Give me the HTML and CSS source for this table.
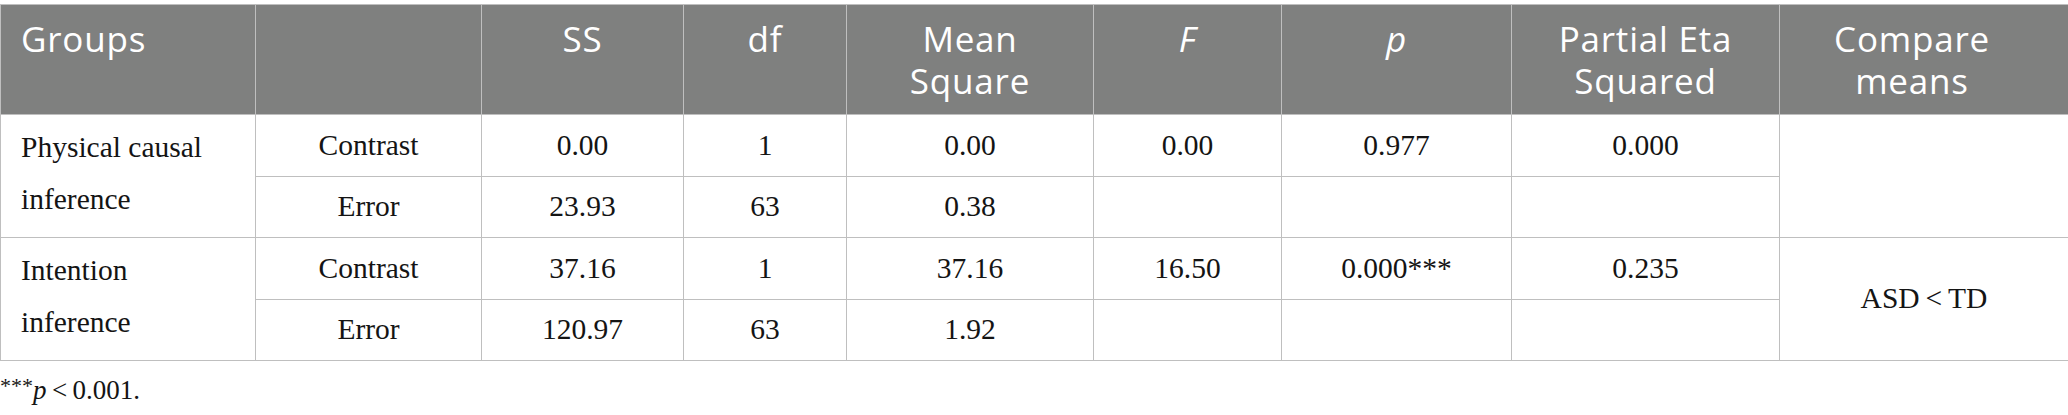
FILE: index.html
```html
<!DOCTYPE html>
<html lang="en">
<head>
<meta charset="utf-8">
<title>ANOVA table</title>
<link rel="stylesheet" href="styles.css">
</head>
<body>
<div class="page">
  <table class="data">
    <colgroup>
      <col class="c1"><col class="c2"><col class="c3"><col class="c4"><col class="c5"><col class="c6"><col class="c7"><col class="c8"><col class="c9">
    </colgroup>
    <thead>
      <tr>
        <th class="left">Groups</th>
        <th></th>
        <th>SS</th>
        <th>df</th>
        <th>Mean<br>Square</th>
        <th><i>F</i></th>
        <th><i>p</i></th>
        <th>Partial Eta<br>Squared</th>
        <th class="last">Compare<br>means</th>
      </tr>
    </thead>
    <tbody>
      <tr class="r-a">
        <td class="group" rowspan="2">Physical causal<br>inference</td>
        <td>Contrast</td>
        <td>0.00</td>
        <td>1</td>
        <td>0.00</td>
        <td>0.00</td>
        <td>0.977</td>
        <td>0.000</td>
        <td class="cmp" rowspan="2"></td>
      </tr>
      <tr class="r-b">
        <td>Error</td>
        <td>23.93</td>
        <td>63</td>
        <td>0.38</td>
        <td></td>
        <td></td>
        <td></td>
      </tr>
      <tr class="r-a">
        <td class="group" rowspan="2">Intention<br>inference</td>
        <td>Contrast</td>
        <td>37.16</td>
        <td>1</td>
        <td>37.16</td>
        <td>16.50</td>
        <td>0.000***</td>
        <td>0.235</td>
        <td class="cmp" rowspan="2">ASD&thinsp;&lt;&thinsp;TD</td>
      </tr>
      <tr class="r-b">
        <td>Error</td>
        <td>120.97</td>
        <td>63</td>
        <td>1.92</td>
        <td></td>
        <td></td>
        <td></td>
      </tr>
    </tbody>
  </table>
  <p class="note"><sup>***</sup><i>p</i>&thinsp;&lt;&thinsp;0.001.</p>
</div>
</body>
</html>
```

FILE: styles.css
```css
html, body {
  margin: 0;
  padding: 0;
  background: #ffffff;
}

.page {
  padding-top: 4px;
}

.data {
  border-collapse: collapse;
  table-layout: fixed;
  width: 2068px;
  font-family: "Liberation Serif", "Times New Roman", serif;
  font-size: 29.5px;
  color: #141414;
}

.c1 { width: 255px; }
.c2 { width: 226px; }
.c3 { width: 202px; }
.c4 { width: 163px; }
.c5 { width: 247px; }
.c6 { width: 188px; }
.c7 { width: 230px; }
.c8 { width: 268px; }
.c9 { width: 289px; }

.data th,
.data td {
  border: 1px solid #bfbfbf;
}

.data thead tr {
  height: 110px;
}

.data th {
  background: #7f807f;
  color: #ffffff;
  font-family: "Open Sans", "Noto Sans", sans-serif;
  font-weight: 400;
  font-size: 35px;
  line-height: 42px;
  letter-spacing: 0.8px;
  text-align: center;
  vertical-align: top;
  padding: 13px 12px 0;
}

.data th.left {
  text-align: left;
  padding-left: 20px;
}

.data th.last {
  padding-right: 36px;
}

.data th i {
  font-style: italic;
}

.r-a { height: 62px; }
.r-b { height: 61px; }

.data td {
  text-align: center;
  vertical-align: middle;
  padding: 0 10px;
  line-height: 1.15;
}

.data td.group {
  text-align: left;
  vertical-align: top;
  padding: 6px 10px 0 20px;
  line-height: 52px;
}

.data td.cmp {
  vertical-align: middle;
}

.note {
  margin: 14px 0 0 0;
  font-family: "Liberation Serif", "Times New Roman", serif;
  font-size: 27px;
  line-height: 30px;
  color: #141414;
}

.note sup {
  font-size: 22px;
  vertical-align: 6px;
  line-height: 0;
}
```
